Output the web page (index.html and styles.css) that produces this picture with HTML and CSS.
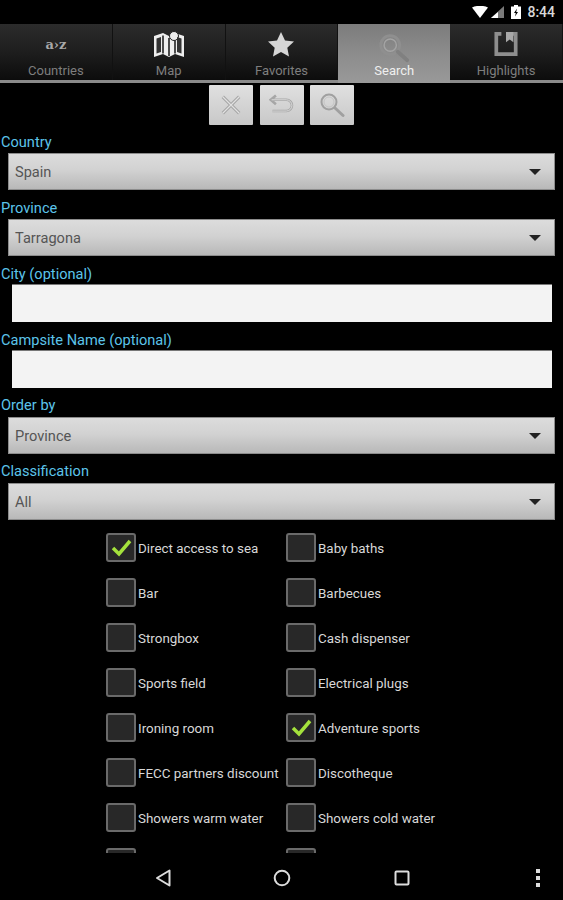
FILE: index.html
```html
<!DOCTYPE html>
<html lang="en">
<head>
  <meta charset="UTF-8" />
  <meta name="viewport" content="width=device-width, initial-scale=1.0"/>
  <title>Campsites - Search</title>
  <link rel="stylesheet" href="styles.css">
</head>
<body>
  <div class="status-bar">
    <svg class="st-wifi" width="16" height="12" viewBox="0 0 16 12"><path d="M0 1.5C4.500-.8 11.500-.8 16 1.500L8 12z" fill="#fff"/></svg>
    <svg class="st-signal" width="13" height="12" viewBox="0 0 13 12"><path d="M13 0v12H0z" fill="#7a7a7a"/><path d="M7 6v6H0z" fill="#fff"/></svg>
    <svg class="st-battery" width="10" height="14" viewBox="0 0 10 14"><path d="M3 0h4v1.500h3V14H0V1.500h3z" fill="#fff"/><path d="M6 3.500 3 8h1.800L4 11.500 7 7H5.200z" fill="#000"/></svg>
    <span class="st-time">8:44</span>
  </div>

  <div class="tabs">
    <div class="tab">
      <span class="tab-icon az">a&#8250;z</span>
      <span class="tab-label">Countries</span>
    </div>
    <div class="tab">
      <svg class="tab-icon" width="32" height="28" viewBox="0 0 32 28"><path d="M1 6 10 3l6 3 6-3 9 3v21l-9-3-6 3-6-3-9 3z" fill="#eee"/><path d="M10 5.500v18M16 8v18M22 5.500v18" stroke="#222" stroke-width="1.600"/><circle cx="21" cy="6" r="4.500" fill="#eee" stroke="#222"/><path d="M3.500 8.500 8 7v15l-4.500 1.500zM24 7l4.500 1.500v15L24 22z" fill="#333"/></svg>
      <span class="tab-label">Map</span>
    </div>
    <div class="tab">
      <svg class="tab-icon" width="28" height="26" viewBox="0 0 28 26"><path d="m14 1 4 8.500 9 1-6.700 6.200L22 25.500l-8-4.500-8 4.500 1.700-8.800L1 10.500l9-1z" fill="#d6d6d6"/></svg>
      <span class="tab-label">Favorites</span>
    </div>
    <div class="tab active">
      <svg class="tab-icon" width="34" height="32" viewBox="0 0 36 32"><circle cx="14" cy="13" r="10" fill="none" stroke="#8f8f8f" stroke-width="3"/><circle cx="14" cy="13" r="6.500" fill="none" stroke="#a4a4a4" stroke-width="1.500"/><path d="m22 20 10 9" stroke="#808080" stroke-width="4" stroke-linecap="round"/></svg>
      <span class="tab-label">Search</span>
    </div>
    <div class="tab">
      <svg class="tab-icon" width="24" height="24" viewBox="0 0 26 28"><path d="M8 3H2.500v22h21V3H20" fill="none" stroke="#8e8e8e" stroke-width="4"/><path d="M13 1h8v11l-4-3-4 3z" fill="#a8a8a8"/></svg>
      <span class="tab-label">Highlights</span>
    </div>
  </div>

  <div class="toolbar">
    <button class="tool-btn">
      <svg width="22" height="22" viewBox="0 0 24 24"><path d="m3 3 18 18M21 3 3 21" stroke="#a6a6a6" stroke-width="3.500"/><path d="m3 3 18 18M21 3 3 21" stroke="#e2e2e2" stroke-width="1.200"/></svg>
    </button>
    <button class="tool-btn">
      <svg width="26" height="24" viewBox="0 0 30 26"><path d="M8 2 2 7l6 5M3 7h17a5.500 5.500 0 0 1 0 13H4" fill="none" stroke="#a6a6a6" stroke-width="3"/><path d="M3 7h17a5.500 5.500 0 0 1 0 13H4" fill="none" stroke="#e2e2e2" stroke-width="1"/></svg>
    </button>
    <button class="tool-btn">
      <svg width="26" height="26" viewBox="0 0 26 26"><circle cx="10" cy="10" r="7.500" fill="none" stroke="#a0a0a0" stroke-width="2"/><circle cx="10" cy="10" r="5" fill="none" stroke="#c4c4c4" stroke-width="1"/><path d="m16 16 8 7.500" stroke="#a0a0a0" stroke-width="3" stroke-linecap="round"/></svg>
    </button>
  </div>

  <form class="search-form">
    <label class="field-label">Country</label>
    <div class="spinner"><span>Spain</span><i class="arrow"></i></div>
    <label class="field-label">Province</label>
    <div class="spinner"><span>Tarragona</span><i class="arrow"></i></div>
    <label class="field-label">City (optional)</label>
    <div class="text-input"></div>
    <label class="field-label">Campsite Name (optional)</label>
    <div class="text-input"></div>
    <label class="field-label tight">Order by</label>
    <div class="spinner"><span>Province</span><i class="arrow"></i></div>
    <label class="field-label tight">Classification</label>
    <div class="spinner"><span>All</span><i class="arrow"></i></div>

    <div class="checks">
      <div class="check"><span class="box"><svg width="21" height="18" viewBox="0 0 21 18"><path d="m2 9 6 6L19 2" fill="none" stroke="#a4e23c" stroke-width="3.500"/></svg></span><span class="check-text">Direct access to sea</span></div>
      <div class="check"><span class="box"></span><span class="check-text">Baby baths</span></div>
      <div class="check"><span class="box"></span><span class="check-text">Bar</span></div>
      <div class="check"><span class="box"></span><span class="check-text">Barbecues</span></div>
      <div class="check"><span class="box"></span><span class="check-text">Strongbox</span></div>
      <div class="check"><span class="box"></span><span class="check-text">Cash dispenser</span></div>
      <div class="check"><span class="box"></span><span class="check-text">Sports field</span></div>
      <div class="check"><span class="box"></span><span class="check-text">Electrical plugs</span></div>
      <div class="check"><span class="box"></span><span class="check-text">Ironing room</span></div>
      <div class="check"><span class="box"><svg width="21" height="18" viewBox="0 0 21 18"><path d="m2 9 6 6L19 2" fill="none" stroke="#a4e23c" stroke-width="3.500"/></svg></span><span class="check-text">Adventure sports</span></div>
      <div class="check"><span class="box"></span><span class="check-text">FECC partners discount</span></div>
      <div class="check"><span class="box"></span><span class="check-text">Discotheque</span></div>
      <div class="check"><span class="box"></span><span class="check-text">Showers warm water</span></div>
      <div class="check"><span class="box"></span><span class="check-text">Showers cold water</span></div>
      <div class="check"><span class="box"></span></div>
      <div class="check"><span class="box"></span></div>
    </div>
  </form>

  <div class="nav-bar">
    <svg class="nav-back" width="16" height="18" viewBox="0 0 16 18"><path d="M14.500 1.500v15L2 9z" fill="none" stroke="#ddd" stroke-width="2" stroke-linejoin="round"/></svg>
    <svg class="nav-home" width="18" height="18" viewBox="0 0 18 18"><circle cx="9" cy="9" r="7.300" fill="none" stroke="#ddd" stroke-width="2"/></svg>
    <svg class="nav-recent" width="16" height="16" viewBox="0 0 16 16"><rect x="1.500" y="1.500" width="13" height="13" rx="1" fill="none" stroke="#ddd" stroke-width="2"/></svg>
    <svg class="nav-more" width="4" height="18" viewBox="0 0 4 18"><path d="M0 0h4v4H0zM0 7h4v4H0zM0 14h4v4H0z" fill="#ddd"/></svg>
  </div>
</body>
</html>
```

FILE: styles.css
```css
body {
  margin: 0;
  width: 563px;
  height: 900px;
  overflow: hidden;
  background: #000;
  font-family: Roboto, sans-serif;
  display: flex;
  flex-direction: column;
}

/* status bar */
.status-bar {
  height: 24px;
  flex: none;
  display: flex;
  align-items: center;
  justify-content: flex-end;
  padding-right: 8px;
  color: #d8d8d8;
  font-size: 14px;
  font-weight: 500;
}

.st-wifi { margin-right: 3px; margin-top: -1px; }
.st-signal { margin-right: 7px; }
.st-battery { margin-right: 6px; }

/* tabs */
.tabs {
  height: 59px;
  flex: none;
  display: flex;
  box-sizing: border-box;
  border-bottom: 3px solid #8a8a8a;
}

.tab {
  flex: 1;
  height: 56px;
  box-sizing: border-box;
  border-right: 1px solid #111;
  background: linear-gradient(#2c2c2c, #1c1c1c 55%, #0c0c0c);
  display: flex;
  flex-direction: column;
  align-items: center;
  justify-content: flex-end;
  padding-bottom: 2px;
  color: #7e7e7e;
  font-size: 13px;
}

.tab-icon {
  height: 32px;
  display: flex;
  align-items: center;
  margin-bottom: 3px;
}

.az {
  font-family: "DejaVu Serif", serif;
  font-weight: bold;
  font-size: 13px;
  color: #a8a8a8;
  height: 30px;
  padding-bottom: 2px;
  box-sizing: border-box;
}

.tab.active {
  height: 59px;
  margin-bottom: -3px;
  padding-bottom: 5px;
  border-right: 0;
  background: linear-gradient(#7c7c7c, #8c8c8c 50%, #999);
  color: #efefef;
}

.tab.active .tab-icon { margin-bottom: -1px; }

.tab-label { line-height: 15px; }

/* toolbar */
.toolbar {
  height: 43px;
  flex: none;
  box-sizing: border-box;
  padding-top: 2px;
  display: flex;
  justify-content: center;
  gap: 6.500px;
}

.tool-btn {
  width: 44px;
  height: 40px;
  padding: 0;
  border: 0;
  border-radius: 1px;
  background: linear-gradient(#e0e0e0, #c8c8c8);
  display: flex;
  align-items: center;
  justify-content: center;
}

/* form */
.search-form {
  flex: 1;
  min-height: 0;
  overflow: hidden;
}

.field-label {
  display: block;
  height: 27px;
  line-height: 32px;
  padding-left: 1px;
  color: #5cc4ea;
  font-size: 14.600px;
  white-space: nowrap;
}

.field-label.tight { line-height: 30px; }

.spinner {
  margin: 0 8px 2px;
  height: 37px;
  box-sizing: border-box;
  border: 1px solid #8c8c8c;
  background: linear-gradient(#dcdcdc, #d2d2d2 45%, #b8b8b8);
  display: flex;
  align-items: center;
  justify-content: space-between;
  padding: 0 13px 0 6px;
  color: #555;
  font-size: 14.600px;
}

.arrow {
  width: 0;
  height: 0;
  border-left: 6px solid transparent;
  border-right: 6px solid transparent;
  border-top: 6px solid #222;
}

.text-input {
  margin: -1px 11px 2px 12px;
  height: 38px;
  box-sizing: border-box;
  background: #f3f3f3;
  border-top: 1px solid #777;
}

/* checkboxes */
.checks {
  margin: 13px 0 0 106px;
  display: grid;
  grid-template-columns: 180px 1fr;
  grid-auto-rows: 45px;
}

.check {
  display: flex;
  align-items: center;
  height: 29px;
  gap: 2px;
  color: #d8d8d8;
  font-size: 13.400px;
  white-space: nowrap;
}

.check-text { padding-top: 2px; }

.box {
  width: 30px;
  height: 29px;
  flex: none;
  box-sizing: border-box;
  border: 2px solid #6a6a6a;
  border-radius: 3px;
  background: #282828;
  display: flex;
  align-items: center;
  justify-content: center;
}

/* nav bar */
.nav-bar {
  height: 47px;
  flex: none;
  background: #000;
  position: relative;
}

.nav-back { position: absolute; left: 155px; top: 16px; }
.nav-home { position: absolute; left: 273px; top: 16px; }
.nav-recent { position: absolute; left: 394px; top: 17px; }
.nav-more { position: absolute; left: 536px; top: 16px; }
```
